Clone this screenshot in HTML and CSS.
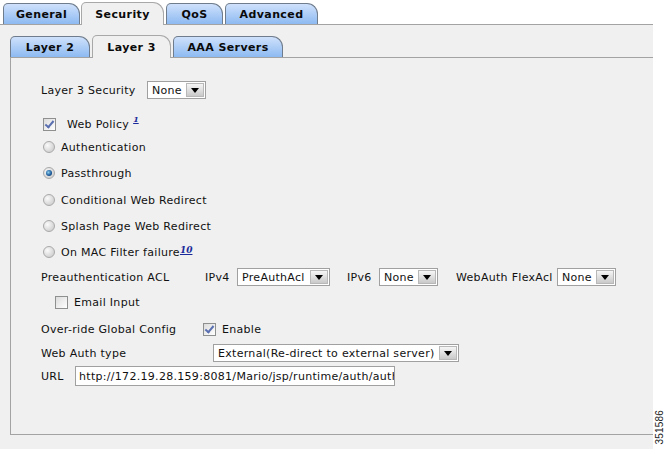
FILE: index.html
```html
<!DOCTYPE html>
<html>
<head>
<meta charset="utf-8">
<link rel="stylesheet" href="styles.css">
</head>
<body>
<div class="page">
  <div class="main">
    <div class="tabbar top">
      <div class="tab w-general">General</div>
      <div class="tab active w-security">Security</div>
      <div class="tab w-qos">QoS</div>
      <div class="tab w-adv">Advanced</div>
    </div>
    <div class="outer">
      <div class="tabbar sub">
        <div class="tab w-l2">Layer 2</div>
        <div class="tab active w-l3">Layer 3</div>
        <div class="tab w-aaa">AAA Servers</div>
      </div>
      <div class="inner">
        <div class="form">
          <div class="row">
            <span class="lbl lbl-l3">Layer 3 Security</span>
            <div class="select w-none"><span class="val">None</span><span class="arrow"></span></div>
          </div>
          <div class="row">
            <span class="check checked ml2"></span>
            <span class="lbl lbl-after-check">Web Policy</span>
            <a class="note">1</a>
          </div>
          <div class="row">
            <span class="radio ml2"></span><span class="lbl lbl-after-radio">Authentication</span>
          </div>
          <div class="row">
            <span class="radio selected ml2"></span><span class="lbl lbl-after-radio">Passthrough</span>
          </div>
          <div class="row">
            <span class="radio ml2"></span><span class="lbl lbl-after-radio">Conditional Web Redirect</span>
          </div>
          <div class="row">
            <span class="radio ml2"></span><span class="lbl lbl-after-radio">Splash Page Web Redirect</span>
          </div>
          <div class="row">
            <span class="radio ml2"></span><span class="lbl lbl-after-radio">On MAC Filter failure</span><a class="note tight">10</a>
          </div>
          <div class="row">
            <span class="lbl lbl-pre">Preauthentication ACL</span>
            <span class="lbl lbl-ip">IPv4</span>
            <div class="select w-preauth"><span class="val">PreAuthAcl</span><span class="arrow"></span></div>
            <span class="lbl lbl-ip6">IPv6</span>
            <div class="select w-none"><span class="val">None</span><span class="arrow"></span></div>
            <span class="lbl lbl-flex">WebAuth FlexAcl</span>
            <div class="select w-none"><span class="val">None</span><span class="arrow"></span></div>
          </div>
          <div class="row">
            <span class="check ml14"></span><span class="lbl lbl-email">Email Input</span>
          </div>
          <div class="row">
            <span class="lbl lbl-override">Over-ride Global Config</span>
            <span class="check checked"></span><span class="lbl lbl-enable">Enable</span>
          </div>
          <div class="row">
            <span class="lbl lbl-wat">Web Auth type</span>
            <div class="select w-ext"><span class="val">External(Re-direct to external server)</span><span class="arrow"></span></div>
          </div>
          <div class="row">
            <span class="lbl lbl-url">URL</span>
            <div class="input"><span class="val">http://172.19.28.159:8081/Mario/jsp/runtime/auth/auth</span></div>
          </div>
        </div>
      </div>
    </div>
  </div>
  <div class="side"><span class="fig">351586</span></div>
</div>
</body>
</html>
```

FILE: styles.css
```css
html, body {
  margin: 0;
  padding: 0;
  background: #ffffff;
}
body {
  font-family: "DejaVu Sans", Verdana, sans-serif;
  font-size: 11px;
  letter-spacing: 0.3px;
  color: #111;
}
.page {
  display: flex;
  width: 666px;
  height: 449px;
  overflow: hidden;
}
.main {
  width: 653px;
  height: 449px;
  display: flex;
  flex-direction: column;
}
.side {
  flex: 1;
  display: flex;
  align-items: flex-end;
  justify-content: center;
  padding-bottom: 4px;
}
.fig {
  writing-mode: vertical-rl;
  transform: rotate(180deg);
  font-family: "Liberation Sans", Arial, sans-serif;
  font-size: 10px;
  color: #222;
  letter-spacing: 0.2px;
}

/* tabs */
.tabbar {
  display: flex;
  align-items: flex-end;
  border-bottom: 1px solid #a3a3a3;
  box-sizing: content-box;
}
.tabbar.top {
  height: 24px;
  padding-left: 3px;
  background: #fff;
}
.tabbar.sub {
  height: 21px;
}
.tab {
  box-sizing: border-box;
  height: 21px;
  border: 1px solid #6f7c8c;
  border-bottom: none;
  border-radius: 5px 11px 0 0;
  background: linear-gradient(#cfe1fb, #8dbaf2);
  font-weight: bold;
  letter-spacing: 0.4px;
  display: flex;
  align-items: center;
  justify-content: center;
  padding-top: 1px;
  margin-right: 2px;
  color: #0a0a0a;
}
.tab.active {
  height: 23px;
  margin-bottom: -1px;
  background: #f0f0f0;
  border-color: #a8a8a8;
  padding-bottom: 1px;
}
.w-general { width: 77px; margin-right: 1px; }
.w-security { width: 83px; }
.w-qos { width: 57px; margin-right: 2px; }
.w-adv { width: 93px; }
.w-l2 { width: 80px; }
.w-l3 { width: 79px; }
.w-aaa { width: 110px; }

.outer {
  flex: 1;
  background: #f0f0f0;
  padding: 11px 0 14px 10px;
  display: flex;
  flex-direction: column;
}
.inner {
  flex: 1;
  border-left: 1px solid #a3a3a3;
  border-bottom: 1px solid #a3a3a3;
  padding: 22px 0 0 30px;
}

/* form */
.form {
  display: grid;
  grid-template-rows: 34px 23px 26px 27px 26px 26px 25px 25px 27px 24px 23px 20px;
  align-items: start;
}
.row {
  height: 20px;
  display: flex;
  align-items: center;
  white-space: nowrap;
}
.lbl { display: inline-block; }
.lbl-l3 { width: 106px; }
.lbl-after-check { margin-left: 11px; }
.lbl-after-radio { margin-left: 6px; }
.lbl-pre { width: 164px; }
.lbl-ip { width: 32px; }
.lbl-ip6 { width: 32px; margin-left: 17px; }
.lbl-flex { width: 101px; margin-left: 18px; }
.lbl-email { margin-left: 6px; }
.lbl-override { width: 162px; }
.lbl-enable { margin-left: 6px; }
.lbl-wat { width: 172px; }
.lbl-url { width: 34px; }
.ml2 { margin-left: 2px; }
.ml14 { margin-left: 14px; }

.note {
  color: #1a2a9a;
  font-weight: bold;
  font-style: italic;
  text-decoration: underline;
  font-size: 8px;
  letter-spacing: 0;
  align-self: flex-start;
  margin-left: 4px;
  font-family: "DejaVu Serif", serif;
}
.note.tight {
  margin-left: 0;
  font-size: 9px;
  align-self: center;
  margin-top: -4px;
}

/* select */
.select {
  box-sizing: border-box;
  height: 18px;
  border: 1px solid #a0a0a0;
  background: #fff;
  display: flex;
  align-items: center;
  justify-content: space-between;
  padding: 0 1px 0 4px;
}
.select .val { padding-top: 1px; }
.arrow {
  box-sizing: border-box;
  width: 18px;
  height: 14px;
  border: 1px solid #b8b8b8;
  background: linear-gradient(#f6f6f6, #c9c9c9);
  position: relative;
}
.arrow::after {
  content: "";
  position: absolute;
  left: 4px;
  top: 4px;
  border-left: 4px solid transparent;
  border-right: 4px solid transparent;
  border-top: 5px solid #000;
}
.w-none { width: 59px; }
.w-preauth { width: 93px; }
.w-ext { width: 246px; }

.input {
  box-sizing: border-box;
  width: 320px;
  height: 20px;
  border: 1px solid #a0a0a0;
  background: #fff;
  overflow: hidden;
  display: flex;
  align-items: center;
  padding-left: 3px;
}

/* checkbox / radio */
.check {
  box-sizing: border-box;
  width: 13px;
  height: 13px;
  border: 1px solid #8e8f8f;
  background: linear-gradient(135deg, #dcdcdc, #ffffff);
  position: relative;
  flex: none;
}
.check.checked::after {
  content: "";
  position: absolute;
  left: 3px;
  top: 0px;
  width: 3px;
  height: 7px;
  border-right: 2px solid #5a6fb0;
  border-bottom: 2px solid #5a6fb0;
  transform: rotate(40deg);
}
.radio {
  box-sizing: border-box;
  width: 12px;
  height: 12px;
  border-radius: 50%;
  border: 1px solid #a9a9a9;
  background: radial-gradient(circle at 35% 35%, #fafafa, #d4d4d4 70%);
  position: relative;
  flex: none;
}
.radio.selected::after {
  content: "";
  position: absolute;
  left: 2px;
  top: 2px;
  width: 6px;
  height: 6px;
  border-radius: 50%;
  background: radial-gradient(circle at 40% 40%, #8fd0f0, #1f5d9c 55%, #0b2c5a);
}
```
